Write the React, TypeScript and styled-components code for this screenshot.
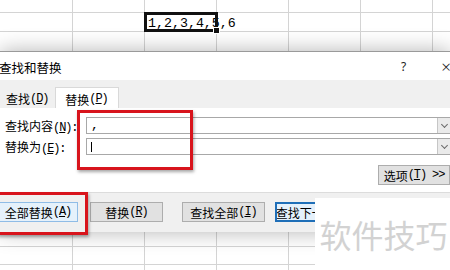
import styled, { createGlobalStyle } from "styled-components";

const GlobalStyle = createGlobalStyle`
  html, body {
    margin: 0;
    padding: 0;
    background: #ffffff;
  }
`;

const COLS = [73, 72, 72, 72, 72, 72, 72];

const App = () => {
  return (
    <Page>
      <GlobalStyle />
      <Sheet>
        <SheetRow $h={13}>
          {COLS.map((w, i) => (
            <Cell key={i} $w={w} />
          ))}
        </SheetRow>
        <SheetRow $h={19}>
          {COLS.map((w, i) => (
            <Cell key={i} $w={w}>
              {i === 2 && (
                <>
                  <CellText>1,2,3,4,5,6</CellText>
                  <Selection>
                    <FillHandle />
                  </Selection>
                </>
              )}
            </Cell>
          ))}
        </SheetRow>
        <SheetRow $h={19}>
          {COLS.map((w, i) => (
            <Cell key={i} $w={w} $noBottom />
          ))}
        </SheetRow>
      </Sheet>

      <Dialog>
        <TitleBar>
          <Title>查找和替换</Title>
          <TitleControls>
            <Help>?</Help>
            <Close>×</Close>
          </TitleControls>
        </TitleBar>

        <TabStrip>
          <Tab>
            查找<Key>(<u>D</u>)</Key>
          </Tab>
          <Tab $active>
            替换<Key>(<u>P</u>)</Key>
          </Tab>
        </TabStrip>

        <TabPage>
          <FieldRow>
            <Label>
              查找内容<Key>(<u>N</u>):</Key>
            </Label>
            <Combo>
              <ComboInput>,</ComboInput>
              <ComboArrow>
                <Chevron />
              </ComboArrow>
            </Combo>
          </FieldRow>
          <FieldRow>
            <Label>
              替换为<Key>(<u>E</u>):</Key>
            </Label>
            <Combo>
              <ComboInput>
                <Caret />
              </ComboInput>
              <ComboArrow>
                <Chevron />
              </ComboArrow>
            </Combo>
          </FieldRow>
          <OptionsRow>
            <Button $w={72}>
              选项<Key>(<u>T</u>) &gt;&gt;</Key>
            </Button>
          </OptionsRow>
        </TabPage>

        <ButtonBar>
          <Button $w={80} $variant="hover" $ml={-2}>
            全部替换<Key>(<u>A</u>)</Key>
          </Button>
          <Button $w={73} $ml={12}>
            替换<Key>(<u>R</u>)</Key>
          </Button>
          <Button $w={83} $ml={19}>
            查找全部<Key>(<u>I</u>)</Key>
          </Button>
          <Button $w={80} $ml={10} $variant="default">
            查找下一个<Key>(<u>F</u>)</Key>
          </Button>
        </ButtonBar>
      </Dialog>

      <Sheet>
        <SheetRow $h={15}>
          {COLS.map((w, i) => (
            <Cell key={i} $w={w} />
          ))}
        </SheetRow>
        <SheetRow $h={18}>
          {COLS.map((w, i) => (
            <Cell key={i} $w={w} />
          ))}
        </SheetRow>
        <SheetRow $h={18}>
          {COLS.map((w, i) => (
            <Cell key={i} $w={w} />
          ))}
        </SheetRow>
      </Sheet>

      <Annotation $x={77} $y={110} $w={116} $h={60} />
      <Annotation $x={-3} $y={192} $w={91} $h={43} />

      <Watermark>软件技巧</Watermark>
    </Page>
  );
};

const Page = styled.div`
  position: relative;
  width: 450px;
  height: 270px;
  overflow: hidden;
  background: #ffffff;
  font-family: "Noto Sans CJK SC", sans-serif;
  font-size: 12px;
  color: #000;
`;

const Key = styled.span`
  font-family: "Liberation Mono", monospace;
  font-size: 12px;
  letter-spacing: -1.1px;
`;

const Sheet = styled.div`
  display: flex;
  flex-direction: column;
`;

const SheetRow = styled.div<{ $h: number }>`
  display: flex;
  height: ${(p) => p.$h}px;
`;

const Cell = styled.div<{ $w: number; $noBottom?: boolean }>`
  position: relative;
  flex: 0 0 ${(p) => p.$w}px;
  min-width: 0;
  box-sizing: border-box;
  border-right: 1px solid #d4d4d4;
  border-bottom: ${(p) => (p.$noBottom ? "none" : "1px solid #d4d4d4")};
`;

const CellText = styled.span`
  position: relative;
  z-index: 2;
  display: block;
  padding: 3px 0 0 3px;
  white-space: nowrap;
  font-family: "Liberation Mono", monospace;
  font-size: 13.3px;
  line-height: 16px;
`;

const Selection = styled.div`
  position: absolute;
  left: -1px;
  top: -1px;
  right: -2px;
  bottom: -1px;
  border: 3px solid #111;
  z-index: 3;
`;

const FillHandle = styled.div`
  position: absolute;
  right: -5px;
  bottom: -5px;
  width: 5px;
  height: 5px;
  background: #111;
  border: 1px solid #fff;
`;

const Dialog = styled.div`
  position: relative;
  z-index: 1;
  height: 181px;
  display: flex;
  flex-direction: column;
  background: #f0f0f0;
  border-top: 1px solid #9a9a9a;
  box-shadow: 0 0 20px rgba(0, 0, 0, 0.3);
  box-sizing: border-box;
`;

const TitleBar = styled.div`
  display: flex;
  align-items: center;
  height: 28px;
  background: #ffffff;
`;

const Title = styled.div`
  margin-left: -1px;
  margin-top: 2px;
  font-size: 12.5px;
`;

const TitleControls = styled.div`
  display: flex;
  align-items: center;
  margin-left: auto;
  margin-right: -1px;
  gap: 35px;
  font-family: "Noto Sans", sans-serif;
`;

const Help = styled.span`
  font-size: 12px;
  color: #222;
`;

const Close = styled.span`
  font-size: 17px;
  font-weight: 300;
  color: #222;
`;

const TabStrip = styled.div`
  display: flex;
  align-items: flex-end;
  height: 28px;
  background: #f0f0f0;
`;

const Tab = styled.div<{ $active?: boolean }>`
  box-sizing: border-box;
  height: ${(p) => (p.$active ? 21 : 18)}px;
  padding: ${(p) => (p.$active ? "2px 10px 0 9px" : "0 6px 0 5px")};
  display: flex;
  align-items: center;
  background: ${(p) => (p.$active ? "#ffffff" : "#f0f0f0")};
  border: 1px solid ${(p) => (p.$active ? "#d9d9d9" : "transparent")};
  border-bottom: none;
  white-space: nowrap;
  margin-bottom: ${(p) => (p.$active ? 0 : 1)}px;
`;

const TabPage = styled.div`
  height: 85px;
  box-sizing: border-box;
  background: #ffffff;
  border-bottom: 1px solid #dcdcdc;
  padding-top: 9px;
  display: flex;
  flex-direction: column;
  gap: 4px;
`;

const FieldRow = styled.div`
  display: flex;
  align-items: center;
  height: 17px;
`;

const Label = styled.div`
  flex: 0 0 81px;
  padding-left: 5px;
  white-space: nowrap;
`;

const Combo = styled.div`
  flex: 1;
  display: flex;
  height: 17px;
  box-sizing: border-box;
  border: 1px solid #a8a8a8;
  border-right: none;
  margin-right: -1px;
`;

const ComboInput = styled.div`
  flex: 1;
  display: flex;
  align-items: center;
  padding-left: 4px;
  font-family: "Liberation Mono", monospace;
  font-size: 13px;
`;

const Caret = styled.span`
  display: block;
  width: 1px;
  height: 10px;
  background: #000;
`;

const ComboArrow = styled.div`
  flex: 0 0 13px;
  display: flex;
  align-items: center;
  justify-content: center;
  background: #eaeaea;
  border-left: 1px solid #c6c6c6;
`;

const Chevron = styled.span`
  display: block;
  width: 4px;
  height: 4px;
  margin-top: -3px;
  border-right: 1px solid #6a6a6a;
  border-bottom: 1px solid #6a6a6a;
  transform: rotate(45deg);
`;

const OptionsRow = styled.div`
  display: flex;
  justify-content: flex-end;
  margin-top: 6px;
`;

const Button = styled.div<{
  $w: number;
  $ml?: number;
  $variant?: "plain" | "hover" | "default";
}>`
  flex: 0 0 ${(p) => p.$w}px;
  height: 20px;
  margin-left: ${(p) => p.$ml ?? 0}px;
  box-sizing: border-box;
  display: flex;
  align-items: center;
  justify-content: center;
  overflow: hidden;
  white-space: nowrap;
  background: ${(p) => (p.$variant === "hover" || p.$variant === "default" ? "#e5f1fb" : "#e1e1e1")};
  border: ${(p) =>
    p.$variant === "default"
      ? "2px solid #1f6fb8"
      : p.$variant === "hover"
        ? "1px solid #8fbce6"
        : "1px solid #adadad"};
`;

const ButtonBar = styled.div`
  flex: 1;
  display: flex;
  align-items: flex-start;
  padding-top: 9px;
  background: #f0f0f0;
`;

const Annotation = styled.div<{ $x: number; $y: number; $w: number; $h: number }>`
  position: absolute;
  z-index: 5;
  left: ${(p) => p.$x}px;
  top: ${(p) => p.$y}px;
  width: ${(p) => p.$w}px;
  height: ${(p) => p.$h}px;
  box-sizing: border-box;
  border: 3px solid #d8141c;
  box-shadow: 1px 2px 3px rgba(0, 0, 0, 0.35);
`;

const Watermark = styled.div`
  position: absolute;
  z-index: 6;
  right: 0;
  top: 198px;
  width: 135px;
  height: 72px;
  display: flex;
  align-items: center;
  justify-content: center;
  padding-left: 2px;
  box-sizing: border-box;
  background: #ffffff;
  font-size: 32px;
  color: #d2d2d2;
`;

export default App;
